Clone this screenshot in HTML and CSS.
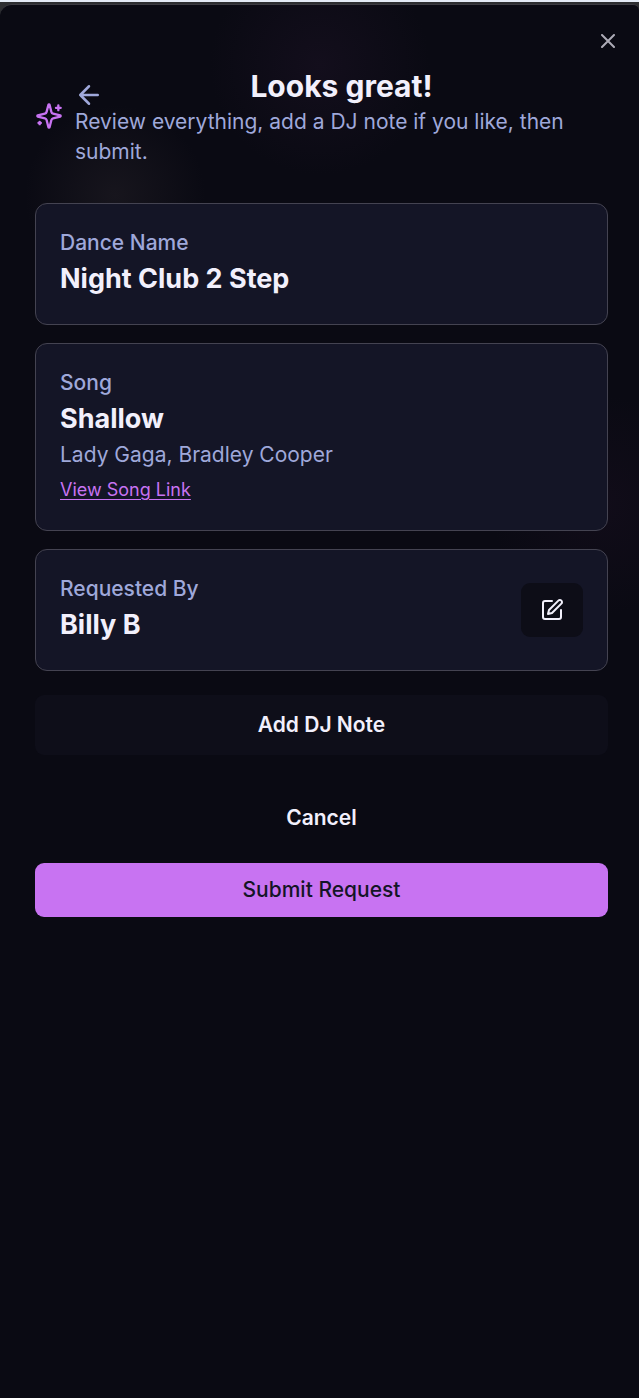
FILE: index.html
```html
<!DOCTYPE html>
<html lang="en">
<head>
<meta charset="utf-8">
<meta name="viewport" content="width=device-width, initial-scale=1">
<title>Review request</title>
<link rel="stylesheet" href="styles.css">
</head>
<body>
<main class="sheet">
  <button class="close" type="button" aria-label="Close">
    <svg class="icon" viewBox="0 0 24 24"><path d="M18 6 6 18M6 6l12 12"/></svg>
  </button>
  <header class="header">
    <svg class="icon sparkles" viewBox="0 0 24 24" aria-hidden="true"><path d="M9.937 15.5A2 2 0 0 0 8.5 14.063l-6.135-1.582a.5.5 0 0 1 0-.962L8.5 9.936A2 2 0 0 0 9.937 8.5l1.582-6.135a.5.5 0 0 1 .963 0L14.063 8.5A2 2 0 0 0 15.5 9.937l6.135 1.581a.5.5 0 0 1 0 .964L15.5 14.063a2 2 0 0 0-1.437 1.437l-1.582 6.135a.5.5 0 0 1-.963 0z"/><path d="M20 3v4M22 5h-4M4 17v2M5 18H3"/></svg>
    <div class="heading">
      <button class="back" type="button" aria-label="Back">
        <svg class="icon" viewBox="0 0 24 24"><path d="m12 19-7-7 7-7M19 12H5"/></svg>
      </button>
      <h1 class="title">Looks great!</h1>
      <p class="intro">Review everything, add a DJ note if you like, then submit.</p>
    </div>
  </header>
  <div class="cards">
    <section class="card">
      <div>
        <p class="label">Dance Name</p>
        <h2 class="value">Night Club 2 Step</h2>
      </div>
    </section>
    <section class="card">
      <div>
        <p class="label">Song</p>
        <h2 class="value">Shallow</h2>
        <p class="artist">Lady Gaga, Bradley Cooper</p>
        <a class="link" href="#">View Song Link</a>
      </div>
    </section>
    <section class="card">
      <div>
        <p class="label">Requested By</p>
        <h2 class="value">Billy B</h2>
      </div>
      <button class="edit" type="button" aria-label="Edit requester">
        <svg class="icon" viewBox="0 0 24 24"><path d="M12 3H5a2 2 0 0 0-2 2v14a2 2 0 0 0 2 2h14a2 2 0 0 0 2-2v-7"/><path d="M18.375 2.625a2.121 2.121 0 1 1 3 3L12 15l-4 1 1-4z"/></svg>
      </button>
    </section>
  </div>
  <button class="button note" type="button">Add DJ Note</button>
  <footer class="actions">
    <button class="button" type="button">Cancel</button>
    <button class="button submit" type="submit">Submit Request</button>
  </footer>
</main>
</body>
</html>
```
FILE: styles.css
```css
* {
  box-sizing: border-box;
}

body {
  margin: 0;
  min-height: 100vh;
  display: flex;
  flex-direction: column;
  background: #2d2e31;
  border-top: 2px solid #e4ebf6;
  padding-top: 2px;
  font-family: Inter, sans-serif;
  font-size: 21px;
  line-height: 30px;
  color: #f2f0fc;
}

h1, h2, p {
  margin: 0;
}

button {
  margin: 0;
  border: 0;
  padding: 0;
  background: none;
  color: inherit;
  font: inherit;
  cursor: pointer;
}

.icon {
  display: block;
  width: 24px;
  height: 24px;
  fill: none;
  stroke: currentColor;
  stroke-width: 2;
  stroke-linecap: round;
  stroke-linejoin: round;
}

.sheet {
  position: relative;
  flex: 1;
  border-top: 1px solid #3b3a41;
  border-radius: 12px 6px 0 0;
  padding: 60px 31px 36px 35px;
  background:
    radial-gradient(circle at 320px 60px, #130e1c 0, transparent 110px),
    radial-gradient(circle at 115px 190px, #17151d 0, transparent 90px),
    radial-gradient(circle at 600px 500px, #110c19 0, transparent 110px),
    #0a0a13;
}

.close {
  position: absolute;
  top: 24px;
  right: 19px;
  opacity: 0.7;
}

.header {
  display: flex;
  align-items: center;
  gap: 12px;
}

.sparkles {
  flex: none;
  width: 28px;
  height: 28px;
  color: #c873f2;
}

.heading {
  position: relative;
  flex: 1;
}

.back {
  position: absolute;
  top: 15px;
  left: -1px;
  color: #9fa8da;
}

.back .icon {
  width: 30px;
  height: 30px;
}

.title {
  font-size: 30px;
  line-height: 42px;
  font-weight: 700;
  text-align: center;
}

.intro,
.artist {
  color: #9fa8da;
}

.cards {
  display: grid;
  gap: 18px;
  margin-top: 36px;
}

.card {
  display: flex;
  align-items: center;
  justify-content: space-between;
  border: 1px solid #444351;
  border-radius: 12px;
  padding: 24px;
  background: #141526;
}

.label {
  font-weight: 500;
  color: #9fa8da;
}

.value {
  font-size: 27px;
  line-height: 42px;
  font-weight: 700;
}

.link {
  display: block;
  width: fit-content;
  margin: 6px 0 3px;
  font-size: 18px;
  line-height: 27px;
  color: #c873f2;
  text-underline-offset: 3px;
}

.edit {
  border-radius: 9px;
  padding: 15px 19px;
  background: #0d0d17;
}

.button {
  display: block;
  width: 100%;
  border-radius: 9px;
  padding: 12px 24px;
  font-weight: 600;
  text-align: center;
}

.note {
  margin-top: 24px;
  padding: 15px 24px;
  background: #0e0e19;
}

.actions {
  display: grid;
  gap: 18px;
  margin-top: 36px;
}

.submit {
  background: #c873f2;
  color: #141526;
  font-weight: 500;
}
```
